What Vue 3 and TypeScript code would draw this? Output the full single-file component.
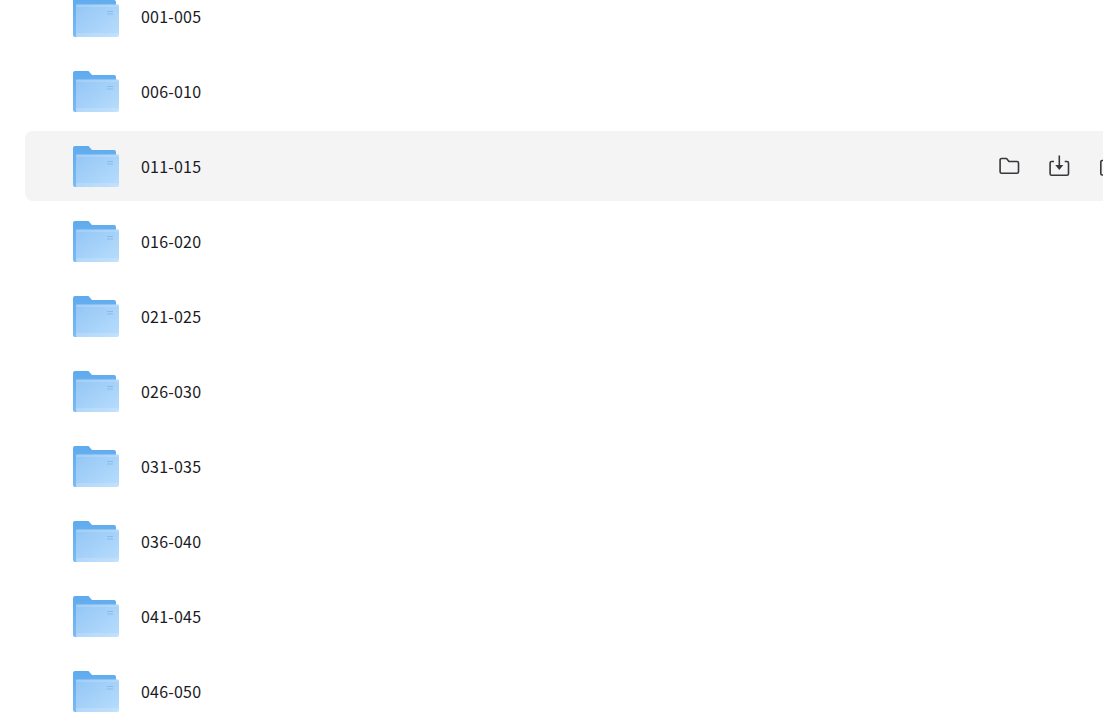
<template>
  <div class="viewport">
    <div class="file-list">
      <div v-for="(name, i) in folders" :key="name" class="file-row" :class="{ active: i === 2 }">
        <svg class="folder" viewBox="0 0 46 44" width="46" height="44">
          <defs>
            <linearGradient :id="'front' + i" x1="0" y1="0" x2="1" y2="1">
              <stop offset="0" stop-color="#93c6f5" />
              <stop offset="1" stop-color="#b8ddfd" />
            </linearGradient>
            <linearGradient :id="'back' + i" x1="0" y1="0" x2="0" y2="1">
              <stop offset="0" stop-color="#5fabee" />
              <stop offset="1" stop-color="#7dbaf1" />
            </linearGradient>
          </defs>
          <path d="M0 2a2 2 0 0 1 2-2h13.500l3.500 4h22a2 2 0 0 1 2 2v35H2a2 2 0 0 1-2-2z" :fill="'url(#back' + i + ')'" />
          <path d="M3 9.500a1 1 0 0 1 1-1h41a1 1 0 0 1 1 1V39a2 2 0 0 1-2 2H4a1 1 0 0 1-1-1z" :fill="'url(#front' + i + ')'" />
          <rect x="3" y="8.500" width="43" height="2.500" rx="1" fill="#fff" opacity=".14" />
          <rect x="3" y="37" width="43" height="4" rx="1.500" fill="#fff" opacity=".15" />
          <rect x="34" y="15" width="6" height="1" fill="#85bcee" />
          <rect x="34" y="17.500" width="6" height="1" fill="#85bcee" />
        </svg>
        <span class="name">{{ name }}</span>
        <div v-if="i === 2" class="actions">
          <svg viewBox="0 0 22 20" width="22" height="20" fill="none" stroke="#37373c" stroke-width="1.600" stroke-linejoin="round">
            <path d="M1.100 4a1.500 1.500 0 0 1 1.500-1.500h4.900l2.500 3h8a1.500 1.500 0 0 1 1.500 1.500v8.700a1.500 1.500 0 0 1-1.500 1.500H2.600a1.500 1.500 0 0 1-1.500-1.500z" />
          </svg>
          <svg viewBox="0 0 22 22" width="22" height="22" fill="none" stroke="#37373c" stroke-width="1.600" stroke-linejoin="round">
            <path d="M5 6.500H2.600A1.500 1.500 0 0 0 1.100 8v10.700a1.500 1.500 0 0 0 1.500 1.500H18a1.500 1.500 0 0 0 1.500-1.500V8A1.500 1.500 0 0 0 18 6.500h-2.300" />
            <path d="M10.300 .5v10" />
            <path d="M6.300 10h8l-4 5z" fill="#37373c" stroke="none" />
          </svg>
          <svg viewBox="0 0 22 20" width="22" height="20" fill="none" stroke="#37373c" stroke-width="1.600">
            <rect x="1.800" y="4.500" width="19" height="14.500" rx="1.500" />
          </svg>
        </div>
      </div>
    </div>
  </div>
</template>

<script setup lang="ts">
const folders: string[] = []
for (let n = 1; n <= 46; n += 5) {
  const pad = (v: number) => String(v).padStart(3, '0')
  folders.push(`${pad(n)}-${pad(n + 4)}`)
}
</script>

<style>
html, body {
  margin: 0;
  background: #fff;
}
</style>

<style scoped>
.viewport {
  width: 1103px;
  height: 714px;
  overflow: hidden;
}

.file-list {
  display: flex;
  flex-direction: column;
  gap: 5px;
  width: 1200px;
  margin-top: -19px;
  padding-left: 25px;
  font-family: "Noto Sans CJK SC", "Noto Sans", sans-serif;
}

.file-row {
  display: flex;
  flex: none;
  align-items: center;
  height: 70px;
  padding-left: 48px;
  border-radius: 8px;
  color: #1a1a1f;
  font-size: 16px;
  letter-spacing: 0.2px;
}

.file-row.active {
  background: #f4f4f4;
}

.folder {
  flex: none;
  margin-top: 4px;
}

.name {
  margin-left: 22px;
}

.actions {
  display: flex;
  align-items: center;
  gap: 28px;
  margin-left: auto;
  margin-right: 104px;
}
</style>
